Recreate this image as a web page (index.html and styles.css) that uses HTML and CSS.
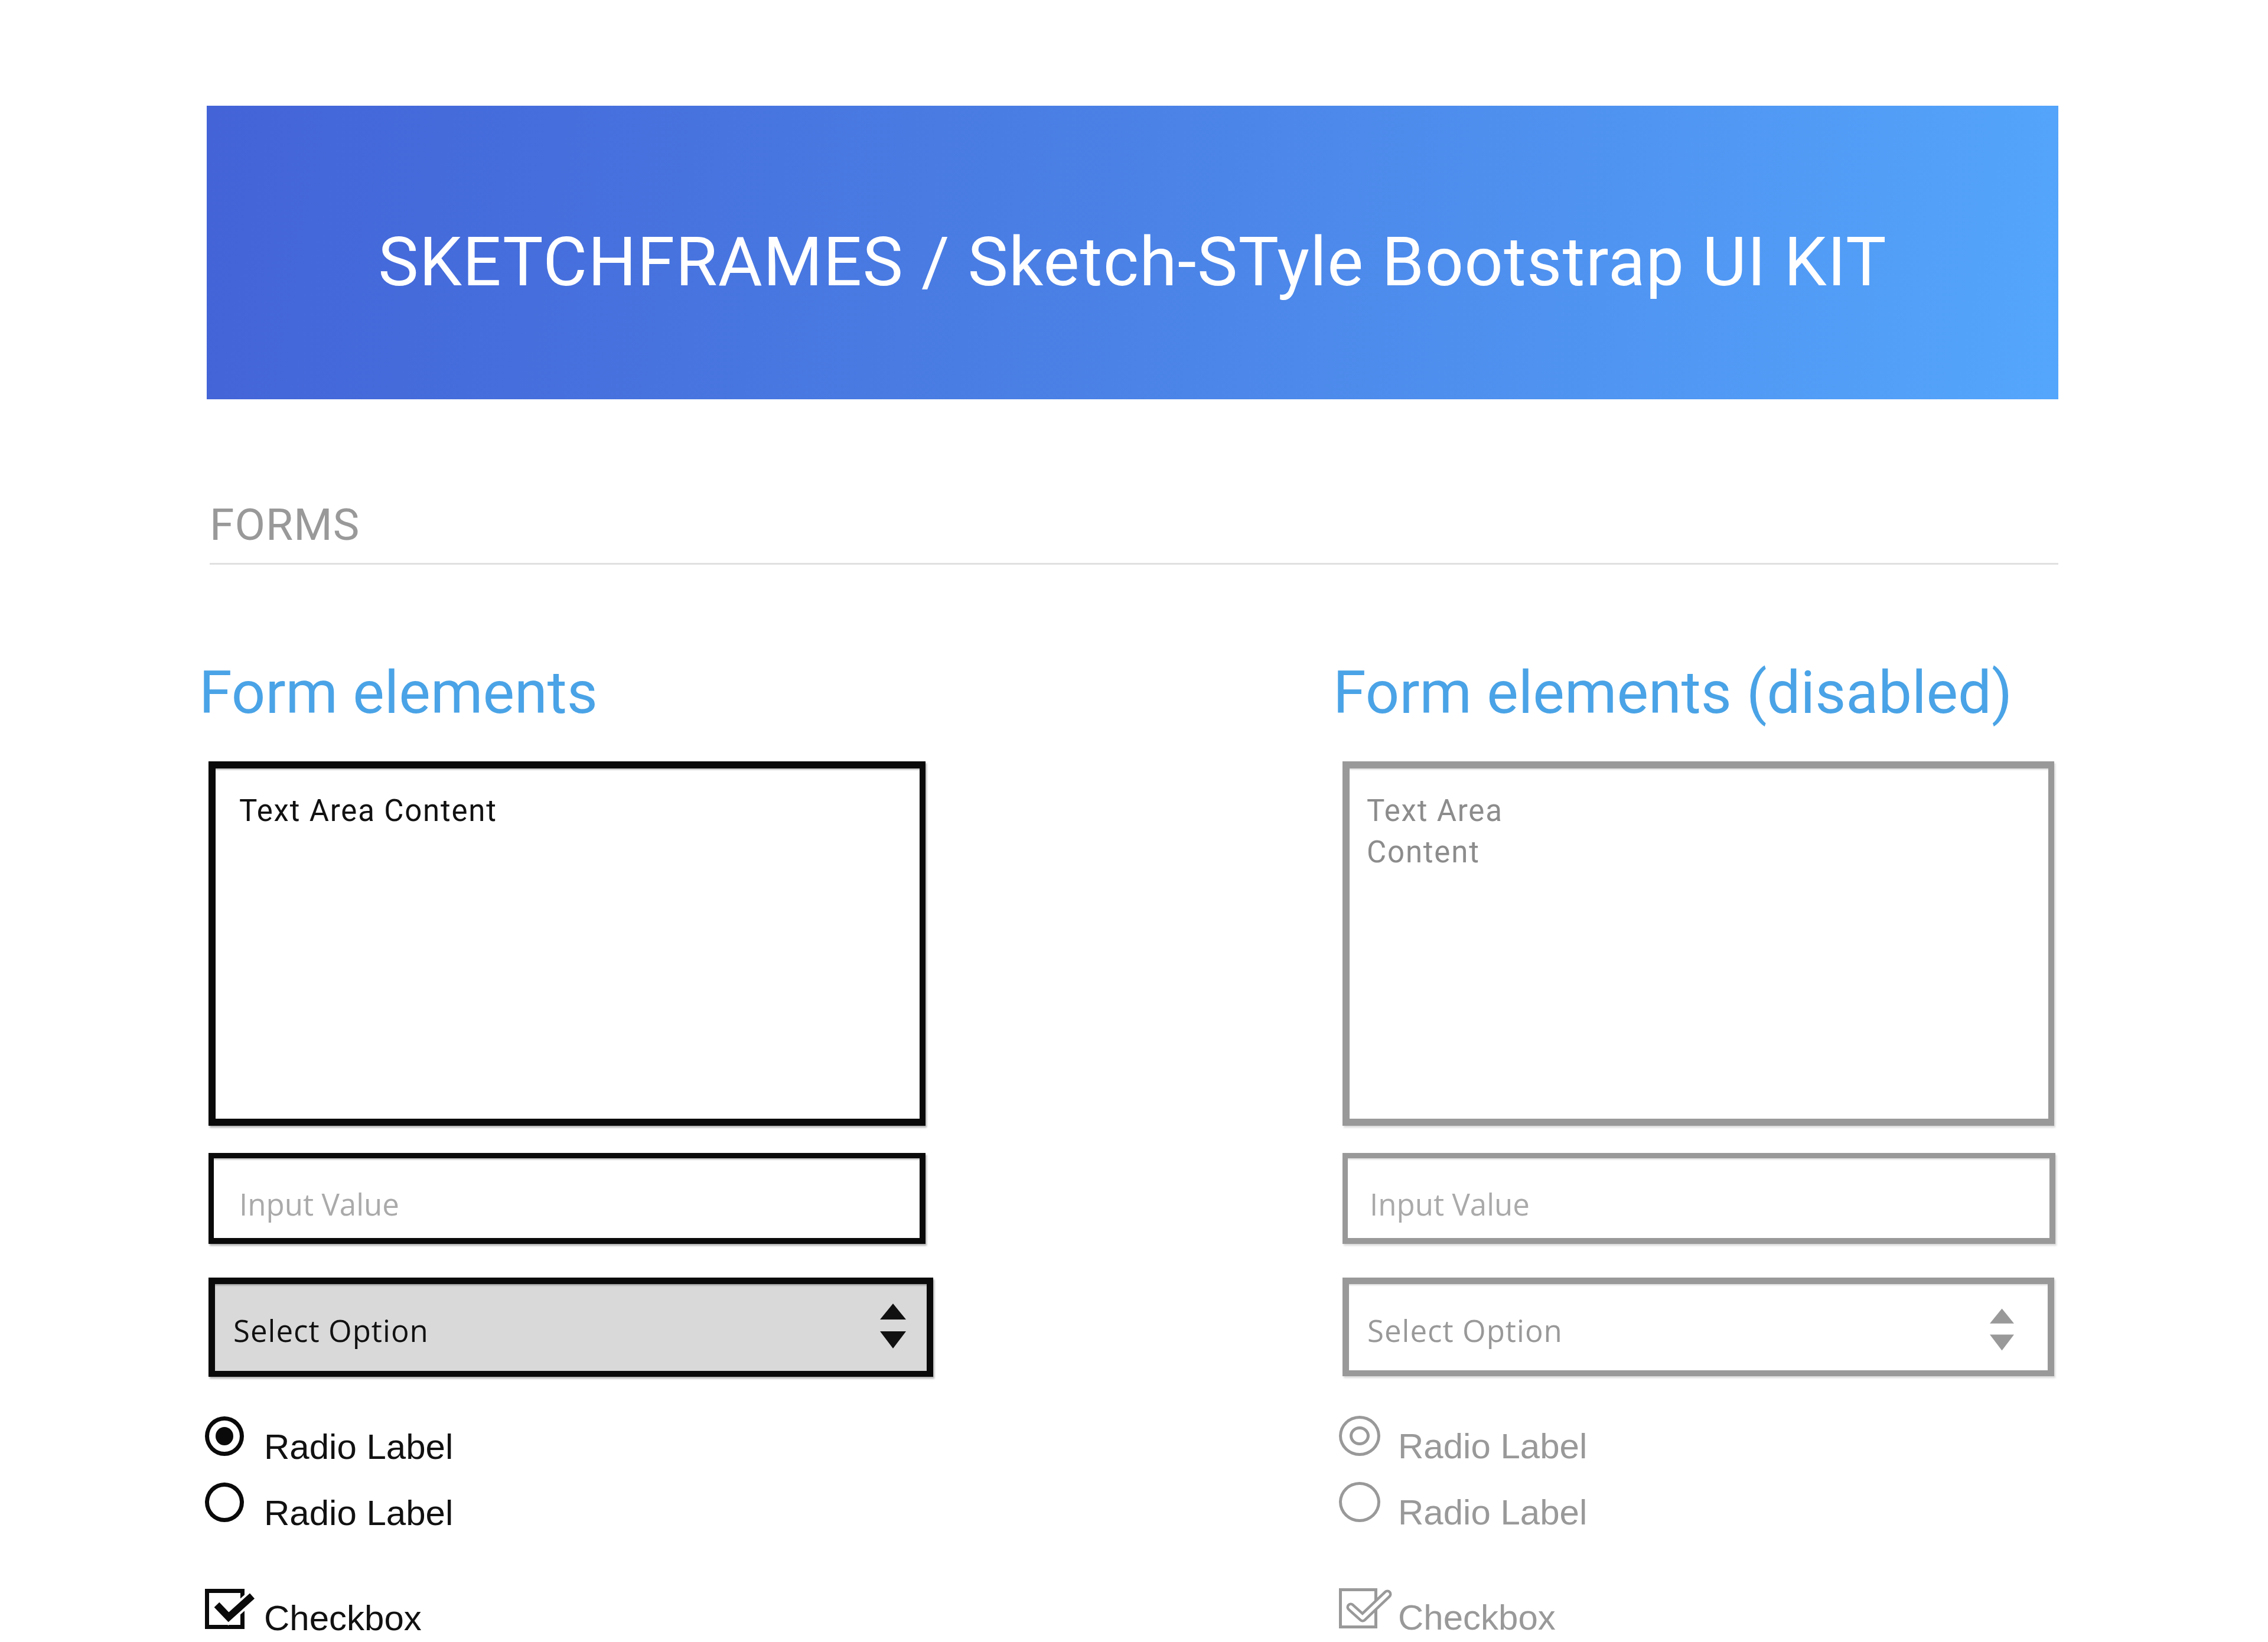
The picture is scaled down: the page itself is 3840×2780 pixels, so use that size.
FILE: index.html
```html
<!DOCTYPE html>
<html>
<head>
    <meta charset="utf-8">
    <title>Sketchframes - Forms</title>
    <link rel="stylesheet" href="styles.css">
</head>
<body>
    <div class="page">
        <header class="banner">
            <h1 class="banner-title">SKETCHFRAMES / Sketch-STyle Bootstrap UI KIT</h1>
        </header>

        <section class="section">
            <h2 class="section-title">FORMS</h2>

            <div class="columns">
                <!-- regular controls -->
                <div class="form-col">
                    <h3 class="col-title">Form elements</h3>

                    <textarea class="sk-box sk-textarea">Text Area Content</textarea>
                    <input class="sk-box sk-input" type="text" placeholder="Input Value">

                    <div class="sk-select">
                        <select class="sk-box">
                            <option>Select Option</option>
                        </select>
                        <svg class="select-arrows" viewBox="0 0 44 76"><path d="M22 0 L44 27 H0 Z M0 47 H44 L22 76 Z"/></svg>
                    </div>

                    <div class="choice choice-radio">
                        <span class="choice-mark"><span class="radio-mark is-checked"></span></span>
                        <span class="choice-text">Radio Label</span>
                    </div>
                    <div class="choice choice-radio">
                        <span class="choice-mark"><span class="radio-mark"></span></span>
                        <span class="choice-text">Radio Label</span>
                    </div>

                    <div class="choice choice-check">
                        <span class="choice-mark">
                            <svg class="check-mark" width="90" height="70" viewBox="0 0 90 70">
                                <rect x="3.5" y="3.5" width="60" height="61" fill="none" stroke="#0a0a0a" stroke-width="7"/>
                                <path d="M20 27 L40 48 L80 12" fill="none" stroke="#fff" stroke-width="20"/>
                                <path d="M20 27 L40 48 L80 12" fill="none" stroke="#0a0a0a" stroke-width="12"/>
                            </svg>
                        </span>
                        <span class="choice-text">Checkbox</span>
                    </div>
                </div>

                <!-- disabled controls -->
                <div class="form-col is-disabled">
                    <h3 class="col-title">Form elements (disabled)</h3>

                    <textarea class="sk-box sk-textarea" disabled>Text Area
Content</textarea>
                    <input class="sk-box sk-input" type="text" placeholder="Input Value" disabled>

                    <div class="sk-select">
                        <select class="sk-box" disabled>
                            <option>Select Option</option>
                        </select>
                        <svg class="select-arrows" viewBox="0 0 44 76"><path d="M22 0 L44 27 H0 Z M0 47 H44 L22 76 Z"/></svg>
                    </div>

                    <div class="choice choice-radio">
                        <span class="choice-mark"><span class="radio-mark is-checked"></span></span>
                        <span class="choice-text">Radio Label</span>
                    </div>
                    <div class="choice choice-radio">
                        <span class="choice-mark"><span class="radio-mark"></span></span>
                        <span class="choice-text">Radio Label</span>
                    </div>

                    <div class="choice choice-check">
                        <span class="choice-mark">
                            <svg class="check-mark" width="90" height="70" viewBox="0 0 90 70">
                                <rect x="2.5" y="2.5" width="60" height="63" fill="none" stroke="#999" stroke-width="5"/>
                                <path d="M20 32 L40 50 L82 10" fill="none" stroke="#999" stroke-width="15" stroke-linecap="round" stroke-linejoin="round"/>
                                <path d="M20 32 L40 50 L82 10" fill="none" stroke="#fff" stroke-width="6" stroke-linecap="round" stroke-linejoin="round"/>
                            </svg>
                        </span>
                        <span class="choice-text">Checkbox</span>
                    </div>
                </div>
            </div>
        </section>
    </div>
</body>
</html>
```

FILE: styles.css
```css
body {
    margin: 0;
    background: #fff;
    color: #111;
    font-family: Roboto, "Liberation Sans", Arial, sans-serif;
}

.page {
    width: 3135px;
    margin-left: 350px;
    padding-top: 179px;
}

/* top banner */
.banner {
    height: 497px;
    box-sizing: border-box;
    padding-top: 32px;
    display: flex;
    align-items: center;
    justify-content: center;
    background: linear-gradient(100deg, #4363d7 0%, #4b82e6 50%, #54a6fc 100%);
}

.banner-title {
    margin: 0;
    font-size: 115px;
    font-weight: 400;
    line-height: 1.2;
    letter-spacing: 1.3px;
    color: #fff;
}

/* section header */
.section {
    margin-left: 5px;
}

.section-title {
    margin: 171px 0 0;
    padding-bottom: 23px;
    border-bottom: 3px solid #e0e0e0;
    font-size: 75px;
    font-weight: 400;
    line-height: 1.1;
    letter-spacing: 1px;
    color: #999;
}

.columns {
    display: grid;
    grid-template-columns: 1240px 1240px;
    column-gap: 680px;
    margin-left: -8px;
}

.col-title {
    margin: 161px 0 0 -10px;
    font-size: 101px;
    font-weight: 400;
    line-height: 1.1;
    color: #4aa3e6;
}

/* hand drawn boxes */
.sk-box {
    display: block;
    box-sizing: border-box;
    margin: 0 0 0 6px;
    border-style: solid;
    border-color: #0a0a0a;
    border-radius: 0;
    background: #fff;
    color: #111;
    outline: none;
    box-shadow: 2px 3px 3px rgba(0, 0, 0, 0.3), inset 0 3px 3px -1px rgba(0, 0, 0, 0.3);
}

.sk-textarea {
    width: 1214px;
    height: 617px;
    margin-top: 61px;
    border-width: 12px 10px 12px 12px;
    padding: 37px 30px 30px 40px;
    font-family: Roboto, sans-serif;
    font-size: 51px;
    line-height: 70px;
    letter-spacing: 1.8px;
    resize: none;
    overflow: hidden;
}

.sk-input {
    width: 1214px;
    height: 154px;
    margin-top: 46px;
    border-width: 9px 10px 10px 9px;
    padding: 20px 20px 0 43px;
    font-family: "Open Sans", sans-serif;
    font-size: 51px;
}

.sk-input::placeholder {
    color: #aaa;
}

.sk-select {
    position: relative;
    width: 1233px;
    margin-top: 57px;
}

.sk-select select {
    -webkit-appearance: none;
    appearance: none;
    width: 1227px;
    height: 168px;
    border-width: 11px 11px 10px 11px;
    padding: 10px 0 0 31px;
    background: #d9d9d9;
    font-family: "Open Sans", sans-serif;
    font-size: 51px;
    letter-spacing: 1px;
}

.select-arrows {
    position: absolute;
    top: 44px;
    right: 46px;
    width: 44px;
    height: 76px;
    fill: #111;
    pointer-events: none;
}

/* radios and checkbox */
.choice {
    display: flex;
    align-items: flex-start;
    font-family: "Liberation Sans", Arial, sans-serif;
    font-size: 60px;
    line-height: 67px;
    color: #111;
}

.choice-mark {
    flex: 0 0 100px;
}

.choice-radio .choice-text {
    padding-top: 18px;
}

.choice-radio {
    margin-top: 27px;
}

.sk-select + .choice-radio {
    margin-top: 67px;
}

.choice-check {
    margin-top: 95px;
}

.choice-check .choice-text {
    padding-top: 16px;
}

.check-mark {
    display: block;
}

.radio-mark {
    position: relative;
    display: block;
    width: 66px;
    height: 67px;
    box-sizing: border-box;
    border: 7px solid #0a0a0a;
    border-radius: 50%;
}

.radio-mark.is-checked::after {
    content: '';
    position: absolute;
    top: 11px;
    left: 11px;
    right: 11px;
    bottom: 11px;
    border-radius: 50%;
    background: #0a0a0a;
}

/* disabled column */
.is-disabled .sk-box {
    border-color: #999;
    color: #8c8c8c;
    background: #fff;
    opacity: 1;
    box-shadow: 2px 3px 3px rgba(0, 0, 0, 0.15), inset 0 3px 3px -1px rgba(0, 0, 0, 0.15);
}

.is-disabled .sk-textarea {
    width: 1205px;
    padding-left: 29px;
}

.is-disabled .sk-input {
    width: 1207px;
    padding-left: 37px;
}

.is-disabled .sk-select select {
    width: 1205px;
    height: 167px;
    color: #999;
}

.is-disabled .select-arrows {
    top: 50px;
    right: 90px;
    width: 41px;
    fill: #999;
}

.is-disabled .choice {
    color: #999;
}

.is-disabled .radio-mark {
    width: 70px;
    height: 68px;
    border: 5px solid #999;
}

.is-disabled .radio-mark.is-checked::after {
    top: 13px;
    left: 13px;
    right: 13px;
    bottom: 13px;
    border: 5px solid #999;
    background: none;
}
```
